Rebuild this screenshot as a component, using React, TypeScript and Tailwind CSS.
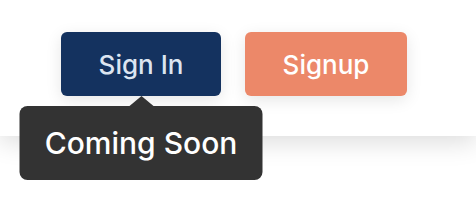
export default function App() {
  return (
    <div className="w-[476px] h-[220px] bg-white overflow-hidden" style={{ fontFamily: "Inter, 'Liberation Sans', sans-serif" }}>
      <header className="h-[136px] bg-white shadow-[0_6px_24px_rgba(0,0,0,0.14)] relative">
        <div className="flex gap-6 pl-[61px] pt-8">
          <div className="relative">
            <button className="w-40 h-16 rounded-md bg-[#14325f] text-[#dce5f1] text-[26px] font-medium shadow-[0_4px_16px_rgba(0,0,0,0.1)]">
              Sign In
            </button>
            <div className="absolute left-1/2 -translate-x-1/2 top-16 flex flex-col items-center z-10">
              <div className="w-0 h-0 border-x-[12px] border-x-transparent border-b-[10px] border-b-[#333333]" />
              <div className="w-[243px] h-[74px] rounded-lg bg-[#333333] text-white text-[30px] font-medium flex items-center justify-center">
                Coming Soon
              </div>
            </div>
          </div>
          <button className="w-[162px] h-16 rounded-md bg-[#ec8869] text-white text-[26px] font-medium shadow-[0_4px_16px_rgba(0,0,0,0.1)]">
            Signup
          </button>
        </div>
      </header>
    </div>
  );
}
